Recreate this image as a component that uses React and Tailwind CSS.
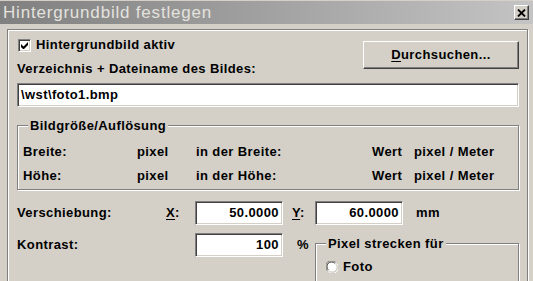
import React from 'react'

const sunken =
  'border border-t-[#808080] border-l-[#808080] border-b-white border-r-white shadow-[inset_1px_1px_0_#404040,inset_-1px_-1px_0_#d4d0c8]'
const etched = 'border border-[#808080] shadow-[inset_1px_1px_0_#fff,1px_1px_0_#fff]'

function CheckBox() {
  return (
    <div className={`w-[13px] h-[13px] bg-white flex items-center justify-center ${sunken}`}>
      <svg width="7" height="7" viewBox="0 0 7 7">
        <path d="M0 2v3l2 2h1l4-4V0L2.5 4.5Z" fill="#000" />
      </svg>
    </div>
  )
}

function Radio() {
  return (
    <svg width="12" height="12" viewBox="0 0 12 12">
      <circle cx="6" cy="6" r="5" fill="#fff" />
      <path d="M1.3 9.5A5.5 5.5 0 0 1 9.5 1.3" stroke="#808080" fill="none" />
      <path d="M2.3 8.8A4.5 4.5 0 0 1 8.8 2.3" stroke="#404040" fill="none" />
      <path d="M10.7 2.5A5.5 5.5 0 0 1 2.5 10.7" stroke="#fff" fill="none" />
      <path d="M9.7 3.2A4.5 4.5 0 0 1 3.2 9.7" stroke="#d4d0c8" fill="none" />
    </svg>
  )
}

function Field({ value, className = '' }) {
  return (
    <div className={`h-[24px] bg-white flex items-center px-[3px] leading-[20px] ${sunken} ${className}`}>
      {value}
    </div>
  )
}

function Group({ label, className = '', children }) {
  return (
    <div className={`relative ${etched} ${className}`}>
      <span className="absolute left-[10px] -top-[8px] bg-[#d4d0c8] px-[2px] leading-[16px]">{label}</span>
      {children}
    </div>
  )
}

export default function App() {
  return (
    <div
      className="w-[533px] h-[281px] overflow-hidden bg-[#d4d0c8] text-black text-[13px] font-bold tracking-[0.4px] leading-[16px]"
      style={{ fontFamily: '"Liberation Sans", Arial, sans-serif' }}
    >
      {/* Title bar */}
      <div className="mt-[1px] h-[23px] flex items-center justify-between bg-gradient-to-r from-[#808080] to-[#c4c4c4]">
        <span className="pl-[3px] text-[17px] font-normal tracking-[0.8px] text-[#e4e2de]">Hintergrundbild festlegen</span>
        <button className="mr-[4px] w-[15px] h-[15px] bg-[#d4d0c8] flex items-center justify-center border border-t-white border-l-white border-r-[#404040] border-b-[#404040] shadow-[inset_-1px_-1px_0_#808080]">
          <svg width="9" height="8" viewBox="0 0 9 8">
            <path d="M1 0.5l7 7M8 0.5l-7 7" stroke="#000" strokeWidth="1.8" />
          </svg>
        </button>
      </div>

      <div className="pt-[5px] pl-[7px] pr-[5px]">
        <div className={`h-[260px] pt-[7px] pl-[9px] pr-[8px] ${etched}`}>
          {/* Top row */}
          <div className="flex justify-between">
            <div>
              <label className="flex items-center h-[16px]">
                <span className="ml-[1px]">
                  <CheckBox />
                </span>
                <span className="ml-[5px]">Hintergrundbild aktiv</span>
              </label>
              <div className="mt-[8px]">Verzeichnis + Dateiname des Bildes:</div>
            </div>
            <button className="mt-[4px] w-[156px] h-[28px] bg-[#d4d0c8] border border-t-white border-l-white border-r-[#404040] border-b-[#404040] shadow-[inset_-1px_-1px_0_#808080] font-bold tracking-[0.4px]">
              <span className="underline underline-offset-2">D</span>urchsuchen...
            </button>
          </div>

          <Field value="\wst\foto1.bmp" className="mt-[6px]" />

          <Group label="Bildgröße/Auflösung" className="mt-[18px] pt-[18px] pb-[5px] pl-[5px]">
            <div className="grid grid-cols-[114px_59px_176px_42px_1fr] gap-y-[8px]">
              <span>Breite:</span>
              <span>pixel</span>
              <span>in der Breite:</span>
              <span>Wert</span>
              <span>pixel / Meter</span>
              <span>Höhe:</span>
              <span>pixel</span>
              <span>in der Höhe:</span>
              <span>Wert</span>
              <span>pixel / Meter</span>
            </div>
          </Group>

          <div className="mt-[11px] flex items-center h-[24px]">
            <span className="w-[149px]">Verschiebung:</span>
            <span className="w-[29px]">
              <span className="underline underline-offset-2">X</span>:
            </span>
            <Field value="50.0000" className="w-[88px] justify-end" />
            <span className="ml-[9px] w-[23px]">
              <span className="underline underline-offset-2">Y</span>:
            </span>
            <Field value="60.0000" className="w-[88px] justify-end" />
            <span className="ml-[13px]">mm</span>
          </div>

          <div className="mt-[8px] flex items-start">
            <div className="w-[298px] flex items-center h-[24px]">
              <span className="w-[178px]">Kontrast:</span>
              <Field value="100" className="w-[88px] justify-end" />
              <span className="ml-[14px]">%</span>
            </div>
            <Group label="Pixel strecken für" className="flex-1 mt-[10px] h-[60px] pt-[17px] pl-[10px]">
              <label className="flex items-center h-[12px]">
                <Radio />
                <span className="ml-[5px]">Foto</span>
              </label>
            </Group>
          </div>
        </div>
      </div>
    </div>
  )
}
